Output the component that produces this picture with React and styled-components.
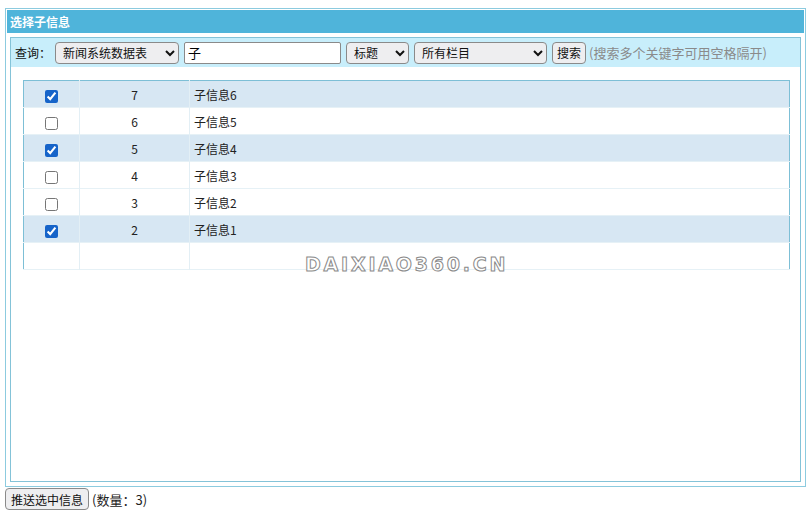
import React from "react";
import styled, { createGlobalStyle } from "styled-components";

const rows = [
  { id: 7, title: "子信息6", checked: true },
  { id: 6, title: "子信息5", checked: false },
  { id: 5, title: "子信息4", checked: true },
  { id: 4, title: "子信息3", checked: false },
  { id: 3, title: "子信息2", checked: false },
  { id: 2, title: "子信息1", checked: true },
];

const App = () => {
  const [items, setItems] = React.useState(rows);
  const count = items.filter((r) => r.checked).length;

  const toggle = (id) =>
    setItems((list) => list.map((r) => (r.id === id ? { ...r, checked: !r.checked } : r)));

  return (
    <Page>
      <GlobalStyle />
      <Panel>
        <Header>选择子信息</Header>
        <Body>
          <Frame>
            <Toolbar>
              <Label>查询：</Label>
              <Select $width={124} defaultValue="news">
                <option value="news">新闻系统数据表</option>
              </Select>
              <Input $width={157} defaultValue="子" />
              <Select $width={63} defaultValue="title">
                <option value="title">标题</option>
              </Select>
              <Select $width={133} defaultValue="all">
                <option value="all">所有栏目</option>
              </Select>
              <Button>搜索</Button>
              <Hint>(搜索多个关键字可用空格隔开)</Hint>
            </Toolbar>
            <Content>
              <Table>
                <tbody>
                  {items.map((r) => (
                    <Row key={r.id} $selected={r.checked}>
                      <CheckCell>
                        <Check type="checkbox" checked={r.checked} onChange={() => toggle(r.id)} />
                      </CheckCell>
                      <NumCell>{r.id}</NumCell>
                      <TitleCell>{r.title}</TitleCell>
                    </Row>
                  ))}
                  <Row>
                    <CheckCell />
                    <NumCell />
                    <TitleCell />
                  </Row>
                </tbody>
              </Table>
            </Content>
          </Frame>
        </Body>
      </Panel>
      <Footer>
        <FooterButton>推送选中信息</FooterButton>
        <Count>(数量：{count})</Count>
      </Footer>
      <Watermark>DAIXIAO360.CN</Watermark>
    </Page>
  );
};

const GlobalStyle = createGlobalStyle`
  body {
    margin: 0;
    background: #fff;
    font-family: "Noto Sans CJK SC", "Noto Sans", sans-serif;
    font-size: 12px;
    color: #222;
  }
`;

const Page = styled.div`
  position: relative;
  padding: 8px 5px 0;
  width: 801px;
`;

const Panel = styled.div`
  border: 1px solid #8ccbdf;
  padding: 1px;
  height: 475px;
  display: flex;
  flex-direction: column;
`;

const Header = styled.div`
  background: #4fb4da;
  color: #fff;
  font-weight: bold;
  height: 23px;
  line-height: 23px;
  padding-left: 3px;
`;

const Body = styled.div`
  flex: 1;
  display: flex;
  padding: 4px 3px 3px;
`;

const Frame = styled.div`
  flex: 1;
  border: 1px solid #84c3d8;
  display: flex;
  flex-direction: column;
`;

const Toolbar = styled.div`
  background: #c8eefb;
  height: 29px;
  display: flex;
  align-items: center;
  gap: 5px;
  padding-left: 4px;
  white-space: nowrap;
`;

const Label = styled.span`
  width: 35px;
  flex-shrink: 0;
  color: #111;
`;

const Select = styled.select`
  width: ${(p) => p.$width}px;
  flex-shrink: 0;
  height: 22px;
  border: 1px solid #8a8a8a;
  border-radius: 4px;
  background: #eeeef0;
  font: inherit;
  color: #111;
  padding: 0 3px;
`;

const Input = styled.input`
  width: ${(p) => p.$width}px;
  flex-shrink: 0;
  height: 22px;
  box-sizing: border-box;
  border: 1px solid #8a8a8a;
  border-radius: 2px;
  background: #fff;
  font: inherit;
  font-size: 13px;
  padding: 0 3px;
`;

const Button = styled.button`
  height: 22px;
  flex-shrink: 0;
  border: 1px solid #8a8a8a;
  border-radius: 4px;
  background: #eeeef0;
  font: inherit;
  color: #111;
  padding: 0 4px;
`;

const FooterButton = styled(Button)`
  padding: 0 5px;
`;

const Hint = styled.span`
  color: #8a8a8a;
  font-size: 13px;
  margin-left: -2px;
`;

const Content = styled.div`
  flex: 1;
  padding: 13px 10px 0 12px;
`;

const Table = styled.table`
  width: 100%;
  border: 1px solid #7dbfd6;
  border-collapse: collapse;
`;

const Row = styled.tr`
  height: 27px;
  background: ${(p) => (p.$selected ? "#d7e7f3" : "#fff")};
  border-bottom: 1px solid #e6f1f6;
`;

const CheckCell = styled.td`
  width: 55px;
  text-align: center;
  border-right: 1px solid #e3eff5;
  padding: 0;
`;

const NumCell = styled.td`
  width: 109px;
  text-align: center;
  border-right: 1px solid #e3eff5;
  padding: 0;
`;

const TitleCell = styled.td`
  padding: 0 0 0 4px;
`;

const Check = styled.input`
  width: 13px;
  height: 13px;
  margin: 0;
  vertical-align: middle;
  accent-color: #1664c9;
`;

const Footer = styled.div`
  display: flex;
  align-items: center;
  gap: 3px;
  margin-top: 1px;
`;

const Count = styled.span`
  font-size: 13px;
`;

const Watermark = styled.div`
  position: absolute;
  left: 305px;
  top: 253px;
  font-family: "DejaVu Sans", sans-serif;
  font-weight: bold;
  font-size: 19px;
  letter-spacing: 2.8px;
  color: #fff;
  -webkit-text-stroke: 1px #8a8a8a;
  pointer-events: none;
`;

export default App;
